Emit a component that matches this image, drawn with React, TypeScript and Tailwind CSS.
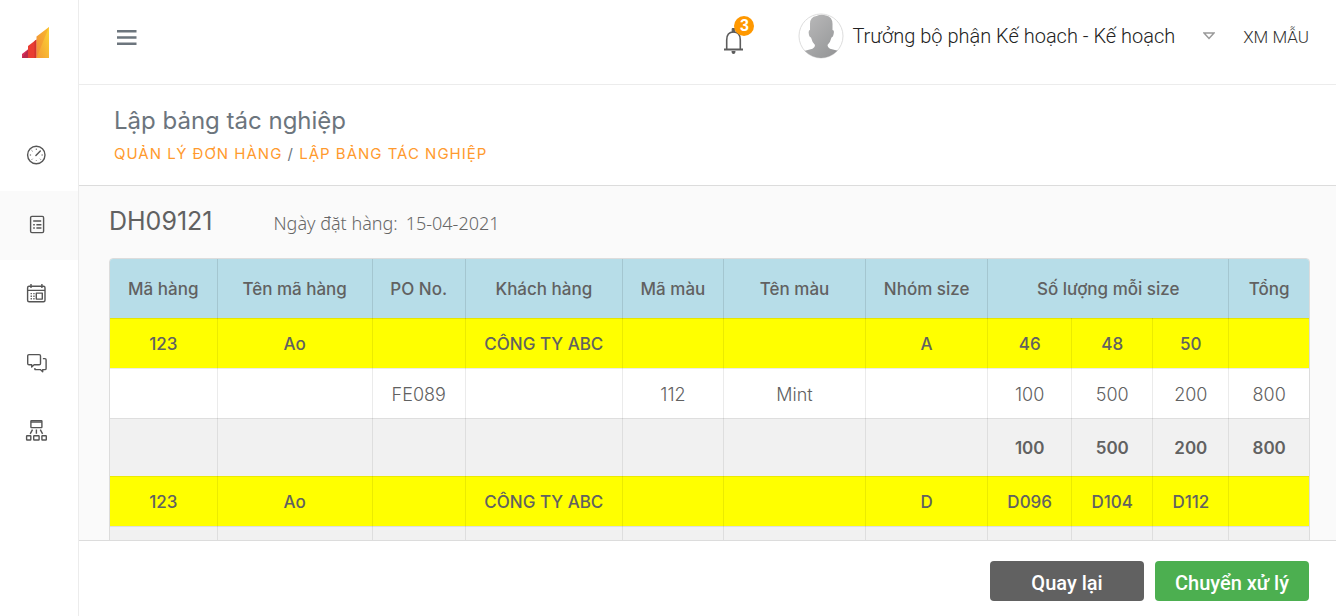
import type { ReactNode } from "react";

type Row = { kind: "group" | "item" | "total"; cells: string[] };

const headers: { label: string; span?: number }[] = [
  { label: "Mã hàng" },
  { label: "Tên mã hàng" },
  { label: "PO No." },
  { label: "Khách hàng" },
  { label: "Mã màu" },
  { label: "Tên màu" },
  { label: "Nhóm size" },
  { label: "Số lượng mỗi size", span: 3 },
  { label: "Tổng" },
];

const rows: Row[] = [
  { kind: "group", cells: ["123", "Ao", "", "CÔNG TY ABC", "", "", "A", "46", "48", "50", ""] },
  { kind: "item", cells: ["", "", "FE089", "", "112", "Mint", "", "100", "500", "200", "800"] },
  { kind: "total", cells: ["", "", "", "", "", "", "", "100", "500", "200", "800"] },
  { kind: "group", cells: ["123", "Ao", "", "CÔNG TY ABC", "", "", "D", "D096", "D104", "D112", ""] },
  { kind: "total", cells: ["", "", "", "", "", "", "", "", "", "", ""] },
];

const rowStyles = {
  group: "h-[50px] bg-[#ffff00] text-[17px] font-medium [&>td]:pt-1",
  item: "h-[50px] bg-white text-[18px] font-light [&>td]:pt-0.5",
  total: "h-[58px] bg-[#f1f1f1] text-[17px] font-semibold [&>td]:pt-1",
};

function Icon({ children }: { children: ReactNode }) {
  return (
    <svg
      viewBox="0 0 24 24"
      className="size-6"
      fill="none"
      stroke="#555"
      strokeWidth="1.4"
      strokeLinejoin="round"
      aria-hidden="true"
    >
      {children}
    </svg>
  );
}

const navItems: { label: string; icon: ReactNode; active?: boolean }[] = [
  {
    label: "Tổng quan",
    icon: (
      <Icon>
        <circle cx="12.300" cy="12" r="8.700" />
        <path d="M11.900 12.600 16.300 8" strokeLinecap="round" />
        <path
          d="M12.300 5.600v1.300M7.600 7.300l.9.900M5.800 12h1.300M17.500 12h1.300M7.800 16.600l.8-.8M16.800 16.600l-.8-.8M12.300 17.200v.600"
          strokeWidth="1"
        />
      </Icon>
    ),
  },
  {
    label: "Quản lý đơn hàng",
    active: true,
    icon: (
      <Icon>
        <rect x="6.600" y="4.400" width="13" height="16.200" rx="1.300" />
        <path d="M9.200 9h8M12.400 12.800h5M12.400 16h5M9.200 12.800h1.600M9.200 16h1.600" />
      </Icon>
    ),
  },
  {
    label: "Lịch",
    icon: (
      <Icon>
        <rect x="3.600" y="5.200" width="17.400" height="15.600" rx="1.500" />
        <path d="M3.600 9.400H21M7 3.100v4M17.900 3.100v4" />
        <rect x="12.300" y="12.100" width="6" height="6" />
        <path d="M6.600 12.600h1.300M9.300 12.600h1.300M6.600 15.200h1.300M9.300 15.200h1.300M6.600 17.800h1.300M9.300 17.800h1.300" />
      </Icon>
    ),
  },
  {
    label: "Trao đổi",
    icon: (
      <Icon>
        <path d="M5 4.600h10.200q1.300 0 1.300 1.300v7.600q0 1.300-1.300 1.300h-5.100l-2.400 2.200v-2.200H5q-1.300 0-1.300-1.300V5.900q0-1.300 1.300-1.300Z" />
        <path d="M18.900 8.600h2q1.200 0 1.200 1.200v8.600q0 1.200-1.200 1.200h-2.200v2.200l-2.400-2.200h-5.400v-1.600" />
      </Icon>
    ),
  },
  {
    label: "Sơ đồ tổ chức",
    icon: (
      <Icon>
        <rect x="6.900" y="1.600" width="11" height="7" rx=".5" />
        <path d="M6.900 3h11M8.500 10.600l-2.300 4.200M12.400 10.600v4.200M16.300 10.600l2.300 4.200" />
        <rect x="2.600" y="16.800" width="4.200" height="4.200" rx=".5" />
        <rect x="9.700" y="16.800" width="5.400" height="4.200" rx=".5" />
        <rect x="17.900" y="16.800" width="4.400" height="4.200" rx=".5" />
      </Icon>
    ),
  },
];

function Logo() {
  return (
    <svg viewBox="0 0 27 31" className="h-[31px] w-[27px]" aria-hidden="true">
      <defs>
        <linearGradient id="logo-amber" x1="0" y1="1" x2="1" y2="0">
          <stop offset="0" stopColor="#f08a3a" />
          <stop offset="1" stopColor="#f9bb2b" />
        </linearGradient>
        <linearGradient id="logo-yellow" x1="0" y1="1" x2="1" y2="0">
          <stop offset="0" stopColor="#f39a33" />
          <stop offset="1" stopColor="#fcd535" />
        </linearGradient>
      </defs>
      <path d="M0 27 6.500 22V31H0Z" fill="#d62f5c" />
      <path d="M0 31 6.500 22V31Z" fill="#b92a4c" />
      <path d="M6 19 14.500 12.500V31H6Z" fill="#e93d33" />
      <path d="M12.500 14 14.500 12.500V31H12.500Z" fill="#d2352f" />
      <path d="M14.500 9.500 27 0v31H14.500Z" fill="url(#logo-amber)" />
      <path d="M27 0v31H14.500Z" fill="url(#logo-yellow)" />
    </svg>
  );
}

function Sidebar() {
  return (
    <aside className="flex w-[79px] shrink-0 flex-col border-r border-[#ececec] bg-white">
      <a href="#home" aria-label="Trang chủ" className="flex h-[122px] items-start pt-[27px] pl-[22px]">
        <Logo />
      </a>
      <nav className="flex flex-col">
        {navItems.map((item) => (
          <a
            key={item.label}
            href="#menu"
            aria-label={item.label}
            className={`flex h-[69px] items-center pb-[3px] pl-6 ${item.active ? "bg-[#fafafa]" : ""}`}
          >
            {item.icon}
          </a>
        ))}
      </nav>
    </aside>
  );
}

function Avatar() {
  return (
    <svg viewBox="0 0 46 46" className="size-[46px] shrink-0" aria-hidden="true">
      <defs>
        <linearGradient id="silhouette" x1="0" y1="0" x2="1" y2="1">
          <stop offset="0" stopColor="#bdbdbd" />
          <stop offset="1" stopColor="#8f9092" />
        </linearGradient>
        <clipPath id="avatar-circle">
          <circle cx="23" cy="23" r="22" />
        </clipPath>
      </defs>
      <circle cx="23" cy="23" r="22" fill="#fff" stroke="#ddd" />
      <path
        clipPath="url(#avatar-circle)"
        fill="url(#silhouette)"
        d="M12 12Q11.500 4 18.500 3 23 1 28 2.500 35 4 34.500 12v5q1.800 0 1.300 3-.5 4-2.300 4.500-1 4.500-4 7.500 0 3 2.500 3.700l9 2.300q4 1 4 8H2q0-7 4-8l8.500-2.300q2.500-.7 2.500-3.700-3-3-4-7.500-2-.5-2.300-4.500-.3-3 1.300-3Z"
      />
    </svg>
  );
}

function Header() {
  return (
    <header className="flex h-[85px] shrink-0 items-start border-b border-[#ececec] bg-white pt-[13px] pr-[27px] pl-[38px]">
      <button type="button" aria-label="Mở menu" className="mt-[17px]">
        <svg viewBox="0 0 20 15" className="h-[15px] w-5" fill="#6c757d" aria-hidden="true">
          <path d="M0 0h19.500v2.500H0zM0 6.250h19.500v2.500H0zM0 12.500h19.500V15H0z" />
        </svg>
      </button>
      <div className="ml-auto flex items-center">
        <button type="button" aria-label="Thông báo" className="relative mr-[53px] h-[46px] w-[22px]">
          <svg viewBox="0 0 22 32" className="mt-1.5 h-8 w-[22px]" fill="none" stroke="#5c5c5c" aria-hidden="true">
            <path d="M1 26.500h19" strokeWidth="2" />
            <path d="M3.700 26V17Q3.700 9 10.500 9t6.800 8V26" strokeWidth="1.600" />
            <path d="M9.200 5.500h2.600V9H9.200z" fill="#5c5c5c" />
            <path d="M8.500 28h4q0 3-2 3t-2-3Z" fill="#5c5c5c" stroke="none" />
          </svg>
          <span className="absolute top-[3px] left-[11px] flex size-5 items-center justify-center rounded-full bg-[#ff9800] font-['Liberation_Sans',sans-serif] text-[16px] leading-5 font-bold text-white">
            3
          </span>
        </button>
        <Avatar />
        <button
          type="button"
          className="ml-2 flex items-center font-['Roboto',sans-serif] text-[20px] leading-6 font-light text-[#222]"
        >
          Trưởng bộ phận Kế hoạch - Kế hoạch
          <svg viewBox="0 0 12 8" className="ml-7 h-2 w-3" fill="none" stroke="#999" strokeWidth="1.500" aria-hidden="true">
            <path d="M1 1h10L6 6.500Z" />
          </svg>
        </button>
        <span className="ml-7 pt-0.5 font-['Roboto',sans-serif] text-[17px] leading-6 font-light text-[#333]">
          XM MẪU
        </span>
      </div>
    </header>
  );
}

function OrderTable() {
  return (
    <div className="overflow-hidden rounded-t-[4px] border border-[#dcdcdc]">
      <table className="w-full table-fixed border-collapse text-center text-[#616161]">
        <colgroup>
          <col className="w-[107px]" />
          <col className="w-[155px]" />
          <col className="w-[93px]" />
          <col className="w-[157px]" />
          <col className="w-[101px]" />
          <col className="w-[142px]" />
          <col className="w-[122px]" />
          <col className="w-[84px]" />
          <col className="w-[81px]" />
          <col className="w-[76px]" />
          <col className="w-[80px]" />
        </colgroup>
        <thead>
          <tr className="h-[59px] bg-[#b7dde8] text-[17px]">
            {headers.map((h) => (
              <th
                key={h.label}
                scope="col"
                colSpan={h.span}
                className="border-r border-b border-black/10 p-0 pt-0.5 font-medium whitespace-nowrap last:border-r-0"
              >
                {h.label}
              </th>
            ))}
          </tr>
        </thead>
        <tbody>
          {rows.map((row, r) => (
            <tr key={r} className={rowStyles[row.kind]}>
              {row.cells.map((cell, c) => (
                <td key={c} className="border-r border-b border-black/8 last:border-r-0">
                  {cell}
                </td>
              ))}
            </tr>
          ))}
        </tbody>
      </table>
    </div>
  );
}

export default function App() {
  return (
    <div className="flex h-screen overflow-hidden bg-[#fafafa] font-['Inter',sans-serif]">
      <Sidebar />
      <div className="flex min-w-0 flex-1 flex-col">
        <Header />
        <section className="h-[101px] shrink-0 border-b border-[#dcdcdc] bg-white pt-5 pl-[35px]">
          <h1 className="text-[24px] leading-8 text-[#6c757d]">Lập bảng tác nghiệp</h1>
          <nav className="mt-[7px] text-[15px] leading-5 tracking-[1px] text-[#6c757d]">
            <a href="#orders" className="text-[#ff9a2e]">QUẢN LÝ ĐƠN HÀNG</a>
            {" / "}
            <a href="#plan" className="text-[#ff9a2e]">LẬP BẢNG TÁC NGHIỆP</a>
          </nav>
        </section>
        <main className="min-h-0 flex-1 overflow-hidden pr-[26px] pl-[30px]">
          <div className="flex h-[72px] items-baseline pt-[19px]">
            <h2 className="text-[25px] leading-8 text-[#616161]">DH09121</h2>
            <p className="ml-[61px] font-['Noto_Sans',sans-serif] text-[18px] leading-6 font-light text-[#666]">
              Ngày đặt hàng:<span className="ml-2">15-04-2021</span>
            </p>
          </div>
          <OrderTable />
        </main>
        <footer className="flex shrink-0 justify-end gap-[11px] border-t border-[#dcdcdc] bg-white pt-5 pr-[27px] pb-[15px]">
          <button
            type="button"
            className="h-10 w-[154px] rounded-[4px] bg-[#616161] pt-1 font-['Roboto',sans-serif] text-[20px] leading-6 font-medium text-white"
          >
            Quay lại
          </button>
          <button
            type="button"
            className="h-10 w-[154px] rounded-[4px] bg-[#4caf50] pt-1 font-['Roboto',sans-serif] text-[20px] leading-6 font-medium text-white"
          >
            Chuyển xử lý
          </button>
        </footer>
      </div>
    </div>
  );
}
